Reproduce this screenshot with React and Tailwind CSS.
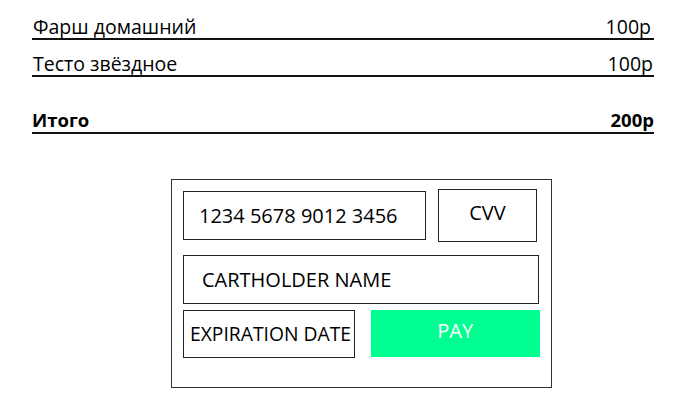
export default function App() {
  const font = { fontFamily: '"Open Sans", "Liberation Sans", sans-serif' };
  return (
    <div className="w-[686px] h-[417px] bg-white text-black relative" style={font}>
      <div className="pl-[32px] pr-[32px] pt-[13px]">
        <div className="flex justify-between items-end border-b-[2px] border-[#111] h-[27px] text-[19.5px] leading-[24px]">
          <span className="pl-[1px] relative top-[1px]">Фарш домашний</span>
          <span className="pr-[3px] relative top-[1px]">100p</span>
        </div>
        <div className="flex justify-between items-end border-b-[2px] border-[#111] h-[37px] text-[19.5px] leading-[24px]">
          <span className="pl-[1px] relative top-[1px]">Тесто звёздное</span>
          <span className="pr-[1px] relative top-[1px]">100p</span>
        </div>
        <div className="flex justify-between items-end border-b-[2px] border-[#111] h-[57px] text-[18.5px] leading-[24px] font-bold">
          <span>Итого</span>
          <span>200p</span>
        </div>
      </div>
      <div className="ml-[171px] mt-[45px] w-[381px] h-[209px] border border-[#333] px-[11px] pt-[11px] text-[20px]">
        <div className="flex">
          <div className="w-[243px] h-[49px] border-[1.5px] border-[#222] flex items-center pl-[15px]">1234 5678 9012 3456</div>
          <div className="ml-[12px] -mt-[2px] w-[99px] h-[53px] border-[1.5px] border-[#222] flex justify-center pt-[8px]">CVV</div>
        </div>
        <div className="mt-[13px] w-[356px] h-[49px] border-[1.5px] border-[#222] flex items-center pl-[18px]">CARTHOLDER NAME</div>
        <div className="flex mt-[6px]">
          <div className="w-[172px] h-[48px] border-[1.5px] border-[#222] flex items-center pl-[6px] whitespace-nowrap text-[19.3px]">EXPIRATION DATE</div>
          <div className="ml-[16px] w-[170px] h-[47px] bg-[#00ff90] text-white flex justify-center pt-[6px]">PAY</div>
        </div>
      </div>
    </div>
  );
}
